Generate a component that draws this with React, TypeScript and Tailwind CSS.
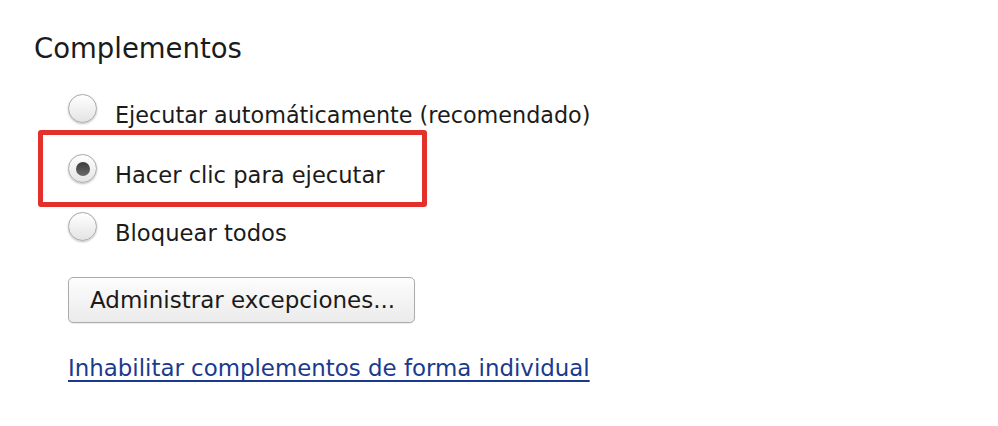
import React from 'react';

const Radio: React.FC<{ checked?: boolean }> = ({ checked }) => (
  <span className="relative flex h-[29px] w-[29px] shrink-0 items-center justify-center rounded-full border border-[#a9a9a9] bg-gradient-to-b from-[#ffffff] to-[#e4e4e4] shadow-[0_1px_2px_rgba(0,0,0,0.25)]">
    {checked && (
      <span className="block h-[14px] w-[14px] rounded-full bg-gradient-to-b from-[#3c3c3c] to-[#6a6a6a]" />
    )}
  </span>
);

const App: React.FC = () => {
  const font = { fontFamily: '"DejaVu Sans", "Liberation Sans", sans-serif' };

  return (
    <div className="h-[426px] w-[998px] overflow-hidden bg-white pl-[34px] pt-[30px] text-[#1b1b1b]" style={font}>
      <h2 className="text-[27.5px] leading-[36px]">Complementos</h2>

      <div className="mt-[28px] flex flex-col">
        <label className="ml-[34px] flex h-[29px] items-start gap-[18px]">
          <Radio />
          <span className="mt-[10px] text-[22.3px] leading-[22px]">Ejecutar automáticamente (recomendado)</span>
        </label>

        <div className="ml-[4px] mt-[7px] flex h-[77px] w-[389px] items-center rounded-[3px] border-[5px] border-[#e3302b] pl-[25px]">
          <label className="flex h-[29px] items-start gap-[18px]">
            <Radio checked />
            <span className="mt-[10px] text-[22.6px] leading-[22px]">Hacer clic para ejecutar</span>
          </label>
        </div>

        <label className="ml-[34px] mt-[5px] flex h-[29px] items-start gap-[18px]">
          <Radio />
          <span className="mt-[10px] text-[22.7px] leading-[22px]">Bloquear todos</span>
        </label>

        <button className="ml-[34px] mt-[36px] h-[46px] w-[347px] rounded-[5px] border border-[#ababab] bg-gradient-to-b from-[#fdfdfd] to-[#ebebeb] text-left pl-[21px] text-[23px] text-[#1b1b1b] shadow-[0_1px_1px_rgba(0,0,0,0.08)]">
          Administrar excepciones...
        </button>

        <a href="#" className="ml-[34px] mt-[30px] w-fit text-[22.9px] leading-[30px] text-[#1a3a8e] underline underline-offset-[4px] [text-decoration-skip-ink:none]">
          Inhabilitar complementos de forma individual
        </a>
      </div>
    </div>
  );
};

export default App;
